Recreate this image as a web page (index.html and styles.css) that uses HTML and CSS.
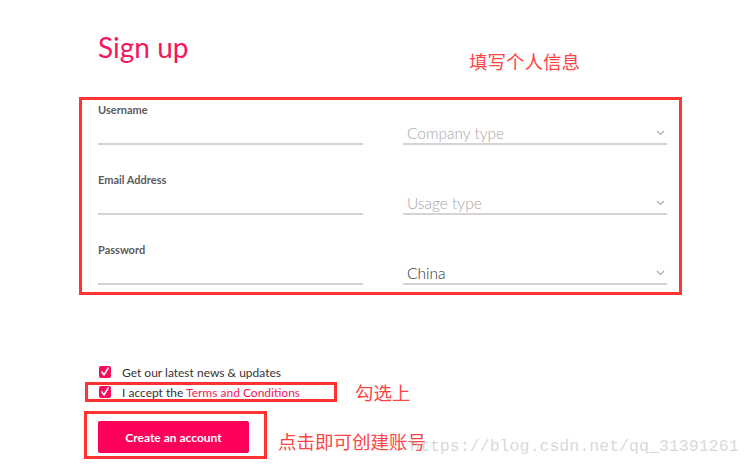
FILE: index.html
```html
<!DOCTYPE html>
<html lang="zh-CN">
<head>
<meta charset="UTF-8" />
<meta name="viewport" content="width=device-width, initial-scale=1.0"/>
<title>Sign up</title>
<link rel="stylesheet" href="styles.css">
</head>
<body>
<header class="head">
    <h1 class="title">Sign up</h1>
    <span class="note note-top">填写个人信息</span>
</header>

<main>
    <div class="mark-box form-box">
        <div class="grid">
            <div class="field">
                <label for="username">Username</label>
                <input id="username" type="text">
            </div>
            <div class="select">
                <span class="placeholder">Company type</span>
                <svg class="chev" width="9" height="6" viewBox="0 0 9 6"><path d="M1 1 L4.5 4.5 L8 1" fill="none" stroke="#a9a9a9" stroke-width="1.1"/></svg>
            </div>
            <div class="field">
                <label for="email">Email Address</label>
                <input id="email" type="text">
            </div>
            <div class="select">
                <span class="placeholder">Usage type</span>
                <svg class="chev" width="9" height="6" viewBox="0 0 9 6"><path d="M1 1 L4.5 4.5 L8 1" fill="none" stroke="#a9a9a9" stroke-width="1.1"/></svg>
            </div>
            <div class="field">
                <label for="password">Password</label>
                <input id="password" type="password">
            </div>
            <div class="select">
                <span class="value">China</span>
                <svg class="chev" width="9" height="6" viewBox="0 0 9 6"><path d="M1 1 L4.5 4.5 L8 1" fill="none" stroke="#a9a9a9" stroke-width="1.1"/></svg>
            </div>
        </div>
    </div>

    <div class="check-row first">
        <span class="box"><svg width="12" height="12" viewBox="0 0 12 12"><path d="M2.5 5.5 L5 9 L9.5 1.5" fill="none" stroke="#fff" stroke-width="1.5"/></svg></span>
        <span>Get our latest news &amp; updates</span>
    </div>

    <div class="line">
        <div class="mark-box terms-box">
            <div class="check-row">
                <span class="box"><svg width="12" height="12" viewBox="0 0 12 12"><path d="M2.5 5.5 L5 9 L9.5 1.5" fill="none" stroke="#fff" stroke-width="1.5"/></svg></span>
                <span>I accept the <a href="#" class="link">Terms and Conditions</a></span>
            </div>
        </div>
        <span class="note note-check">勾选上</span>
    </div>

    <div class="line">
        <div class="mark-box btn-box">
            <button class="create-btn">Create an account</button>
        </div>
        <span class="note note-btn">点击即可创建账号</span>
    </div>
</main>

<div class="watermark">https://blog.csdn.net/qq_31391261</div>
</body>
</html>
```

FILE: styles.css
```css
body {
    margin: 0;
    font-family: Lato, "Open Sans", sans-serif;
    background: #fff;
    color: #333;
    position: relative;
    height: 466px;
    overflow: hidden;
}

.head {
    display: grid;
    grid-template-columns: 371px auto;
    height: 97px;
    padding-left: 98px;
}
.title {
    margin: 0;
    padding-top: 30px;
    font-size: 28px;
    font-weight: 400;
    line-height: 35px;
    color: #f5155c;
}

.note {
    font-family: "Noto Sans CJK SC", sans-serif;
    font-size: 18.5px;
    line-height: 24px;
    color: #f44;
}
.note-top {
    padding-top: 49px;
}

/* red marker boxes */
.mark-box {
    border: 3px solid #f33;
}

.form-box {
    margin-left: 79px;
    width: 597px;
    height: 192px;
}
.grid {
    display: grid;
    grid-template-columns: 265px 264px;
    grid-auto-rows: 45px;
    column-gap: 40px;
    row-gap: 25px;
    padding-left: 16px;
}
.field {
    display: flex;
    flex-direction: column;
}
.field label {
    margin-top: 3px;
    font-size: 11px;
    line-height: 14px;
    font-weight: 700;
    color: #5b5b5b;
}
.field input {
    height: 26px;
    padding: 0;
    border: none;
    border-bottom: 2px solid #d4d4d4;
    outline: none;
    font-family: inherit;
}

.select {
    align-self: end;
    display: flex;
    justify-content: space-between;
    align-items: center;
    height: 20px;
    padding-left: 4px;
    padding-right: 2px;
    border-bottom: 2px solid #d4d4d4;
    font-size: 15.5px;
    font-weight: 300;
}
.select .placeholder {
    color: #a6a6a6;
}
.select .value {
    color: #333;
}

.check-row {
    display: flex;
    align-items: center;
    gap: 11px;
    height: 14px;
    font-size: 12px;
    color: #333;
}
.check-row.first {
    height: 20px;
    margin-top: 67px;
    padding-left: 99px;
}
.box {
    width: 12px;
    height: 12px;
    border-radius: 2px;
    background: #fa0a5b;
    display: flex;
}
.link {
    color: #f5155c;
    text-decoration: none;
}

.line {
    display: flex;
    align-items: flex-start;
}
.terms-box {
    margin-left: 85px;
    width: 235px;
    padding-left: 11px;
}
.note-check {
    margin-left: 18px;
    line-height: 20px;
    align-self: center;
}

.btn-box {
    margin-top: 9px;
    margin-left: 84px;
    padding: 7px 15px 3px 11px;
}
.create-btn {
    display: block;
    width: 151px;
    height: 32px;
    border: none;
    border-radius: 2px;
    background: #fc005a;
    color: #fff;
    font-family: inherit;
    font-size: 12px;
    font-weight: 700;
    cursor: pointer;
}
.note-btn {
    margin-left: 11px;
    align-self: flex-end;
    margin-bottom: 6px;
}

.watermark {
    position: absolute;
    left: 410px;
    top: 437px;
    font-family: "Liberation Mono", monospace;
    font-size: 16.6px;
    line-height: 20px;
    color: rgba(190, 190, 190, 0.6);
}
```
